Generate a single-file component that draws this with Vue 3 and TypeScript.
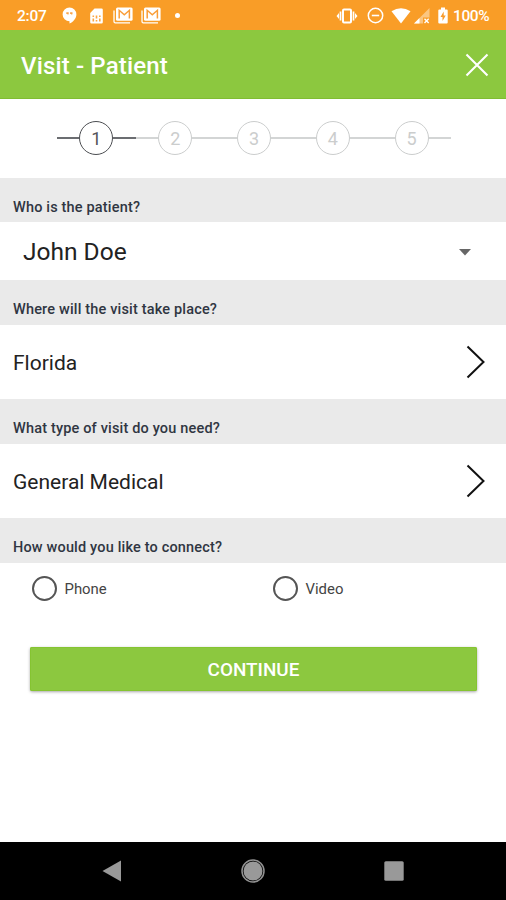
<script setup lang="ts">
import { ref } from 'vue'

interface Place {
  question: string
  answer: string
}

const steps: number[] = [1, 2, 3, 4, 5]
const current = ref<number>(1)
const places: Place[] = [
  { question: 'Where will the visit take place?', answer: 'Florida' },
  { question: 'What type of visit do you need?', answer: 'General Medical' },
]
const methods: string[] = ['Phone', 'Video']
const connectBy = ref<string>('')
</script>

<template>
  <div class="screen">
    <div class="status">
      <span class="clock">2:07</span>
      <svg class="hangouts" width="15" height="17" viewBox="0 0 15 17">
        <path d="M7.500.5a6.900 6.900 0 0 0 0 13.800V16.600c3.300-1.700 6.900-5 6.900-9.200A6.900 6.900 0 0 0 7.500.5z" fill="#fff" />
        <path d="M4.300 5.200h2.400v1.900l-1 1.100v-1.300H4.300zM8.100 5.200h2.400v1.900l-1 1.100v-1.300H8.100z" fill="#f9a44a" />
      </svg>
      <svg class="sim" width="13" height="16" viewBox="0 0 13 16">
        <path d="M4.500.5H11.500a1.300 1.300 0 0 1 1.300 1.300v12.400a1.300 1.300 0 0 1-1.300 1.300H1.500A1.300 1.300 0 0 1 .2 14.200V5z" fill="#fff" />
        <path d="M2.500 7.500h1.600v1.600H2.500zM5.700 7.500h1.600v3H5.700zM9 7.500h1.600v1.600H9zM2.500 10.500h1.600v3H2.500zM5.700 12h1.600v1.600H5.700zM9 10.500h1.600v3H9z" fill="#fba642" />
      </svg>
      <svg v-for="n in 2" :key="n" class="gmail" width="20" height="17" viewBox="0 0 20 17">
        <path d="M1 3.500v11a1.300 1.300 0 0 0 1.300 1.300H17" fill="none" stroke="#fff" stroke-width="1.300" />
        <rect x="3" y=".6" width="16.600" height="13.200" rx="1.500" fill="#fff" />
        <path d="M6.200 11.500V3.300l5.100 4.400 5.100-4.400v8.200" fill="none" stroke="#f99d38" stroke-width="1.500" />
      </svg>
      <span class="dot"></span>
      <span class="spacer"></span>
      <svg class="vibrate" width="22" height="16" viewBox="0 0 22 16">
        <rect x="7" y="1.500" width="8" height="13" rx="1" fill="none" stroke="#fff" stroke-width="2" />
        <path d="M4.500 3.500v9M17.500 3.500v9" stroke="#fff" stroke-width="1.700" />
        <path d="M3 5v6L.5 8zM19 5v6l2.500-3z" fill="#fff" />
      </svg>
      <svg class="dnd" width="17" height="17" viewBox="0 0 17 17">
        <circle cx="8.500" cy="8.500" r="7.200" fill="none" stroke="#fff" stroke-width="1.500" />
        <path d="M4.800 8.500h7.400" stroke="#fff" stroke-width="1.600" />
      </svg>
      <svg class="wifi" width="20" height="16" viewBox="0 0 20 16">
        <path d="M.5 3.300Q10-2.700 19.500 3.300L10 15.500z" fill="#fff" />
      </svg>
      <svg class="signal" width="16" height="16" viewBox="0 0 16 16">
        <path d="M0 15.500L15.500 0v9.500H9v6z" fill="#fff" fill-opacity=".42" />
        <path d="M0 15.500L5.500 10v5.500z" fill="#fff" />
        <path d="M10.500 10.800l4.200 4.200m0-4.200l-4.200 4.200" stroke="#fff" stroke-width="1.400" />
      </svg>
      <svg class="battery" width="10" height="17" viewBox="0 0 10 17">
        <path d="M3 .5h4v2h1.700q1 0 1 1v12q0 1-1 1H1.300q-1 0-1-1v-12q0-1 1-1H3z" fill="#fff" />
        <path d="M5.700 4.500L2.500 10h2v4l3.200-5.500h-2z" fill="#f89b2c" />
      </svg>
      <span class="percent">100%</span>
    </div>

    <header class="bar">
      <h1>Visit - Patient</h1>
      <svg class="close" width="24" height="24" viewBox="0 0 24 24">
        <path d="M1.500 1.500l21 21m0-21l-21 21" fill="none" stroke="#fff" stroke-width="2.100" />
      </svg>
    </header>

    <nav class="stepper">
      <div v-for="s in steps" :key="s" class="step" :class="{ active: s === current }">
        <span class="number">{{ s }}</span>
      </div>
    </nav>

    <h2 class="question first">Who is the patient?</h2>
    <div class="select">
      <span>John Doe</span>
      <svg width="12" height="7" viewBox="0 0 12 7"><path d="M0 0h12L6 6.500z" fill="#666" /></svg>
    </div>

    <template v-for="p in places" :key="p.question">
      <h2 class="question">{{ p.question }}</h2>
      <div class="row">
        <span>{{ p.answer }}</span>
        <svg width="20" height="34" viewBox="0 0 20 34">
          <path d="M1.500 1.500L17.500 17l-16 15.500" fill="none" stroke="#111" stroke-width="2" />
        </svg>
      </div>
    </template>

    <h2 class="question">How would you like to connect?</h2>
    <div class="methods">
      <label v-for="m in methods" :key="m" class="method">
        <input v-model="connectBy" type="radio" name="method" :value="m" />
        <span>{{ m }}</span>
      </label>
    </div>

    <button class="continue" type="button"><span>CONTINUE</span></button>

    <footer class="system">
      <svg width="20" height="22" viewBox="0 0 20 22"><path d="M.5 11L19 .5v21z" fill="#999" /></svg>
      <svg width="24" height="24" viewBox="0 0 24 24">
        <circle cx="12" cy="12" r="9.500" fill="#999" />
        <circle cx="12" cy="12" r="11" fill="none" stroke="#929292" stroke-width="1.500" />
      </svg>
      <svg width="20" height="20" viewBox="0 0 20 20"><rect x=".3" y=".3" width="19.400" height="19.400" rx="1.500" fill="#999" /></svg>
    </footer>
  </div>
</template>

<style>
body {
  margin: 0;
}
</style>

<style scoped>
.screen {
  width: 506px;
  height: 900px;
  display: flex;
  flex-direction: column;
  overflow: hidden;
  background: #fff;
  font-family: Roboto, "Liberation Sans", sans-serif;
  color: #222;
}
.screen > * {
  box-sizing: border-box;
  flex-shrink: 0;
}
h1,
h2 {
  margin: 0;
}
.status {
  height: 30px;
  display: flex;
  align-items: center;
  padding: 1px 16px 0 17px;
  background: #f99d27;
  color: #fff;
  font-size: 15.500px;
  font-weight: 500;
}
.status svg {
  flex: none;
}
.clock {
  width: 45px;
  letter-spacing: -0.2px;
}
.sim {
  margin-left: 13px;
}
.gmail {
  margin-left: 10px;
}
.gmail + .gmail {
  margin-left: 8px;
}
.dot {
  width: 5px;
  height: 5px;
  margin-left: 14px;
  border-radius: 50%;
  background: #fff;
}
.spacer {
  flex: 1;
}
.dnd {
  margin-left: 9px;
}
.wifi {
  margin-left: 7px;
}
.signal {
  margin-left: 3px;
}
.battery {
  margin-left: 8px;
}
.percent {
  width: 37px;
  margin-left: 5px;
  letter-spacing: -0.4px;
}
.bar {
  height: 69px;
  display: flex;
  align-items: center;
  justify-content: space-between;
  padding: 2px 17px 0 21px;
  background: #8cc83f;
  border-bottom: 1px solid #80bd32;
}
.bar h1 {
  padding-top: 1px;
  color: #fff;
  font-size: 24px;
  font-weight: 500;
  letter-spacing: 0.15px;
}
.stepper {
  height: 79px;
  display: flex;
  align-items: center;
  padding: 0 55px 1px 57px;
}
.step {
  flex: 1;
  display: flex;
  align-items: center;
  color: #cbcdcd;
}
.step::before,
.step::after {
  content: "";
  flex: 1;
  height: 2px;
  background: #d3d5d5;
}
.number {
  box-sizing: border-box;
  width: 34px;
  height: 34px;
  border: 1.500px solid #cbcdcd;
  border-radius: 50%;
  font-size: 18px;
  line-height: 33px;
  text-align: center;
}
.active {
  color: #55565a;
}
.active .number {
  border-color: #4c4e52;
}
.active::before,
.active::after {
  background: #6b6d71;
}
.question {
  height: 45px;
  padding: 20px 13px 0;
  background: #eaeaea;
  color: #303642;
  font-size: 14.500px;
  line-height: 20px;
  font-weight: 500;
  letter-spacing: 0.17px;
}
.question.first {
  height: 44px;
}
.select {
  height: 58px;
  display: flex;
  align-items: center;
  justify-content: space-between;
  padding: 2px 35px 0 23px;
  font-size: 24.500px;
}
.select span {
  padding-bottom: 2px;
}
.row {
  height: 74px;
  display: flex;
  align-items: center;
  justify-content: space-between;
  padding: 0 20px 0 13px;
  font-size: 21px;
}
.row span {
  padding-top: 2px;
}
.methods {
  height: 53px;
  display: grid;
  grid-template-columns: 241px 1fr;
  align-items: center;
  padding: 0 0 2px 32px;
}
.method {
  display: flex;
  align-items: center;
  gap: 7.500px;
  font-size: 14.900px;
  color: #444;
}
.method input {
  appearance: none;
  box-sizing: border-box;
  width: 25px;
  height: 25px;
  margin: 0;
  border: 2px solid #555;
  border-radius: 50%;
}
.continue {
  width: 447px;
  height: 44px;
  margin: 31px 0 0 30px;
  padding: 0;
  border: 0;
  border-radius: 2px;
  background: #8cc83f;
  box-shadow: inset 0 0 0 1px #85c431, 0 1px 3px rgba(0, 0, 0, 0.35);
  color: #fff;
  font: 500 18.900px Roboto, "Liberation Sans", sans-serif;
}
.system {
  height: 58px;
  display: flex;
  align-items: center;
  justify-content: space-between;
  margin-top: auto;
  padding: 0 102px;
  background: #000;
}
</style>
